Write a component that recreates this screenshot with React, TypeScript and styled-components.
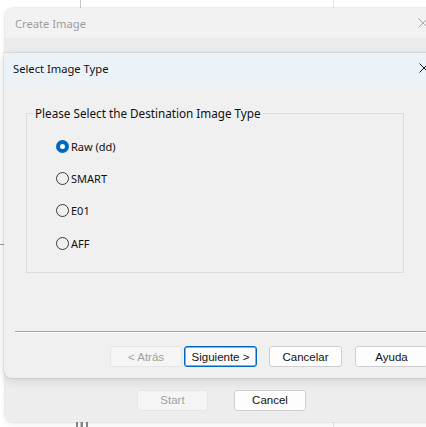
import React from "react";
import styled, { createGlobalStyle } from "styled-components";

const GlobalStyle = createGlobalStyle`
  html, body {
    margin: 0;
    padding: 0;
    background: #ffffff;
    overflow: hidden;
  }
  body {
    font-family: "Liberation Sans", Arial, sans-serif;
  }
`;

const Desktop = styled.div`
  position: relative;
  width: 426px;
  height: 427px;
  overflow: hidden;
  background: #ffffff;
`;

const BackLine = styled.div<{ left: number; color: string }>`
  position: absolute;
  top: 0;
  bottom: 0;
  left: ${({ left }) => left}px;
  width: 1px;
  background: ${({ color }) => color};
`;

const BottomTicks = styled.div`
  position: absolute;
  left: 76px;
  bottom: 0;
  width: 13px;
  height: 5px;
  display: flex;
  gap: 3px;
  & > span {
    width: 2px;
    background: #8a8a8a;
  }
`;

const LeftMark = styled.div`
  position: absolute;
  left: 0;
  top: 244px;
  width: 4px;
  height: 1px;
  background: #9a9a9a;
`;

/* ventana de fondo */
const OuterWindow = styled.div`
  position: absolute;
  left: 5px;
  top: 8px;
  width: 460px;
  height: 414px;
  border-radius: 8px;
  background: #ececec;
  box-shadow: 0 0 0 1px rgba(0, 0, 0, 0.05), 0 2px 6px rgba(0, 0, 0, 0.08);
  display: flex;
  flex-direction: column;
  overflow: hidden;
`;

const OuterTitle = styled.div`
  height: 30px;
  flex: none;
  display: flex;
  align-items: center;
  padding-left: 10px;
  background: #f2f2f2;
  color: #9c9c9c;
  font-family: "Noto Sans", "Open Sans", sans-serif;
  font-size: 11.2px;
`;

const CloseX = styled.svg<{ faded?: boolean }>`
  position: absolute;
  width: 10px;
  height: 10px;
  stroke: ${({ faded }) => (faded ? "#a8a8a8" : "#1a1a1a")};
  stroke-width: 1;
`;

const OuterBody = styled.div`
  flex: 1;
  display: flex;
  flex-direction: column;
  justify-content: flex-end;
  background: linear-gradient(#ebebeb, #ededed);
`;

const OuterFooter = styled.div`
  height: 44px;
  display: flex;
  align-items: center;
  padding-left: 132px;
  gap: 26px;
`;

/* diálogo modal */
const Dialog = styled.div`
  position: absolute;
  left: 4px;
  top: 53px;
  width: 460px;
  height: 325px;
  background: #f0f0f0;
  border-radius: 0 0 0 8px;
  box-shadow: 0 0 0 1px rgba(0, 0, 0, 0.06), 0 3px 10px rgba(0, 0, 0, 0.12);
  display: flex;
  flex-direction: column;
  overflow: hidden;
`;

const DialogTitle = styled.div`
  height: 30px;
  flex: none;
  display: flex;
  align-items: center;
  padding-left: 9px;
  background: #ebf3f8;
  color: #111;
  font-family: "Noto Sans", "Open Sans", sans-serif;
  font-size: 11.2px;
`;

const DialogBody = styled.div`
  flex: 1;
  display: flex;
  flex-direction: column;
`;

const Group = styled.fieldset`
  margin: 22px 0 0 22px;
  width: 378px;
  box-sizing: border-box;
  padding: 0;
  border: 1px solid #dcdcdc;
`;

const Legend = styled.legend`
  margin-left: 6px;
  padding: 0 2px;
  font-family: "Noto Sans", "Open Sans", sans-serif;
  font-size: 11.7px;
  color: #111;
`;

const RadioList = styled.div`
  display: flex;
  flex-direction: column;
  padding: 9px 0 12px 29px;
`;

const RadioRow = styled.label`
  height: 32.4px;
  display: flex;
  align-items: center;
  gap: 2px;
  font-family: "Noto Sans", "Open Sans", sans-serif;
  font-size: 11px;
  color: #111;
`;

const RadioDot = styled.span<{ checked?: boolean }>`
  width: 13px;
  height: 13px;
  box-sizing: border-box;
  border-radius: 50%;
  flex: none;
  border: ${({ checked }) => (checked ? "4px solid #0067c0" : "1px solid #3a3a3a")};
  background: ${({ checked }) => (checked ? "#ffffff" : "transparent")};
`;

const Footer = styled.div`
  margin-top: auto;
  display: flex;
  flex-direction: column;
`;

const Separator = styled.div`
  margin-left: 11px;
  height: 1px;
  background: #a0a0a0;
  border-bottom: 1px solid #ffffff;
`;

const ButtonRow = styled.div`
  display: flex;
  padding: 13px 0 11px 106px;
`;

const Button = styled.button<{ disabled?: boolean; focused?: boolean; gapLeft?: number; wide?: number }>`
  width: ${({ wide }) => wide ?? 73}px;
  height: 21px;
  margin: 0 0 0 ${({ gapLeft }) => gapLeft ?? 0}px;
  padding: 0;
  box-sizing: border-box;
  border-radius: 3px;
  font-family: "Liberation Sans", Arial, sans-serif;
  font-size: 11.5px;
  flex: none;
  background: ${({ disabled }) => (disabled ? "#f5f5f5" : "#fdfdfd")};
  color: ${({ disabled }) => (disabled ? "#a0a0a0" : "#111")};
  border: 1px solid
    ${({ disabled, focused }) => (focused ? "#0067c0" : disabled ? "#e6e6e6" : "#cfcfcf")};
  box-shadow: ${({ focused }) => (focused ? "inset 0 0 0 0.5px #0067c0" : "none")};
`;

const Cross = ({ faded, style }: { faded?: boolean; style: React.CSSProperties }) => (
  <CloseX faded={faded} style={style} viewBox="0 0 10 10">
    <path d="M0.5 0.5 L9.5 9.5 M9.5 0.5 L0.5 9.5" fill="none" />
  </CloseX>
);

const options = ["Raw (dd)", "SMART", "E01", "AFF"];

export default function App() {
  return (
    <Desktop>
      <GlobalStyle />
      <BackLine left={80} color="#c8c8c8" />
      <BackLine left={333} color="#e6e6e6" />
      <LeftMark />
      <BottomTicks>
        <span />
        <span />
        <span />
      </BottomTicks>

      <OuterWindow>
        <OuterTitle>Create Image</OuterTitle>
        <OuterBody>
          <OuterFooter>
            <Button disabled wide={71}>Start</Button>
            <Button wide={72}>Cancel</Button>
          </OuterFooter>
        </OuterBody>
      </OuterWindow>
      <Cross faded style={{ left: 418, top: 18 }} />

      <Dialog>
        <DialogTitle>Select Image Type</DialogTitle>
        <DialogBody>
          <Group>
            <Legend>Please Select the Destination Image Type</Legend>
            <RadioList>
              {options.map((o, i) => (
                <RadioRow key={o}>
                  <RadioDot checked={i === 0} />
                  {o}
                </RadioRow>
              ))}
            </RadioList>
          </Group>
          <Footer>
            <Separator />
            <ButtonRow>
              <Button disabled wide={72}>&lt; Atrás</Button>
              <Button focused gapLeft={2}>Siguiente &gt;</Button>
              <Button gapLeft={12}>Cancelar</Button>
              <Button gapLeft={13}>Ayuda</Button>
            </ButtonRow>
          </Footer>
        </DialogBody>
      </Dialog>
      <Cross style={{ left: 419, top: 63 }} />
    </Desktop>
  );
}
